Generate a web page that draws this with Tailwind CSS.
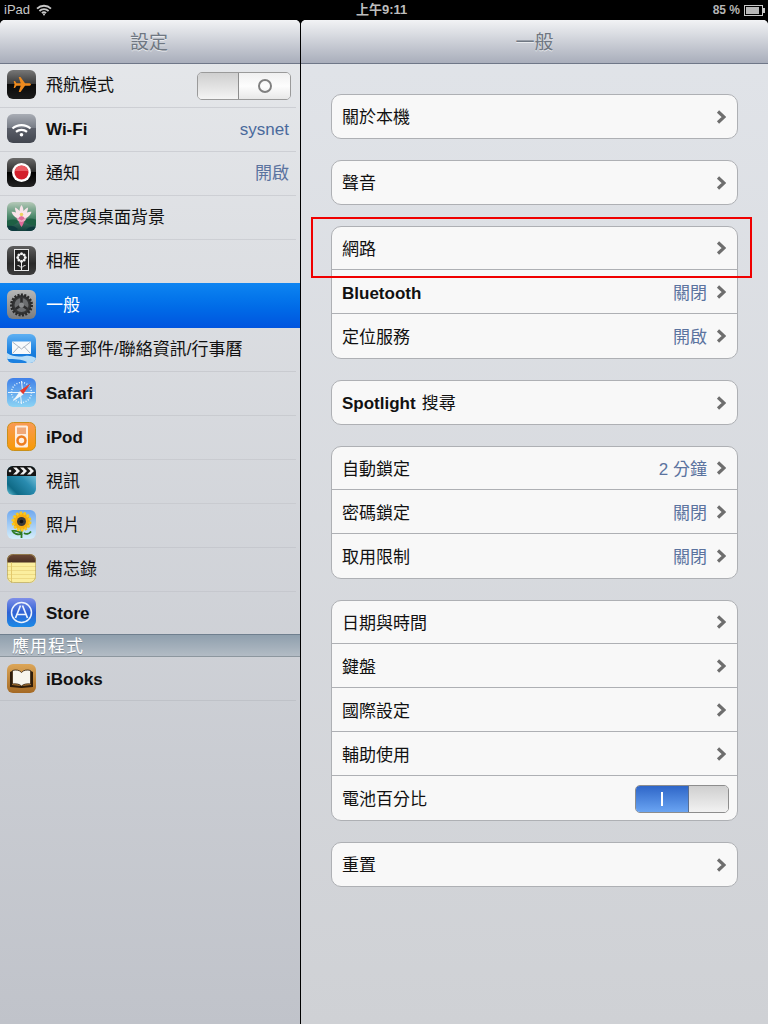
<!DOCTYPE html>
<html lang="zh-TW">
  <head>
    <meta charset="UTF-8" />
    <meta name="viewport" content="width=device-width, initial-scale=1.0" />
    <title>設定</title>
    <script src="https://cdn.jsdelivr.net/npm/@tailwindcss/browser@4"></script>
  </head>
  <body class="bg-black font-['Liberation_Sans','Noto_Sans_CJK_TC',sans-serif]">
    <div class="relative w-[768px] h-[1024px] overflow-hidden bg-black">
      <!-- status bar -->
      <div class="relative flex items-center justify-between h-5 pl-1 pr-[3px] text-[13px] text-[#c8c8c8]">
        <div class="flex items-center gap-[6px]">
          <span>iPad</span>
          <svg width="16" height="12" viewBox="0 0 16 12" fill="none" stroke="#c8c8c8" stroke-width="1.8">
            <path d="M1 4.600C5 .8 11 .8 15 4.600" />
            <path d="M3.400 7C6 4.600 10 4.600 12.600 7" />
            <path d="M5.900 9.200C7 8.200 9 8.200 10.100 9.200" />
            <circle cx="8" cy="10.600" r="1" fill="#c8c8c8" stroke="none" />
          </svg>
        </div>
        <div class="absolute left-[356px] top-0 h-5 leading-[19px] font-bold text-[#bdbdbd]">上午9:11</div>
        <div class="flex items-center gap-1">
          <span class="text-[12px] font-bold text-[#b5b5b5]">85 %</span>
          <svg width="21" height="11" viewBox="0 0 21 11">
            <rect x=".5" y=".5" width="18" height="10" fill="none" stroke="#c8c8c8" />
            <rect x="2" y="2" width="13" height="7" fill="#b8b8b8" />
            <rect x="19" y="3" width="2" height="5" fill="#c8c8c8" />
          </svg>
        </div>
      </div>

      <div class="flex h-[1004px]">
        <!-- left column -->
        <div class="w-[300px] shrink-0 rounded-t-[5px] overflow-hidden bg-gradient-to-b from-[#e6e8eb] to-[#c0c3ca]">
          <div class="flex items-center justify-center h-[44px] pt-[3px] pr-[2px] border-b border-[#6f7788] bg-gradient-to-b from-[#f2f3f5] to-[#a9aebb] text-[19px] text-[#6f7782] [text-shadow:0_1px_0_#e8eaee]">設定</div>

          <div class="flex h-[44px] pt-[6px] pl-[7px] pr-[5px] mr-1 border-b border-[#cdcfd4]">
            <svg class="shrink-0" width="29" height="29" viewBox="0 0 29 29">
              <defs><linearGradient id="air" x1="0" y1="0" x2="0" y2="1"><stop offset="0" stop-color="#777" /><stop offset=".48" stop-color="#3a3a3a" /><stop offset=".5" stop-color="#0a0a0a" /><stop offset="1" stop-color="#1a1a1a" /></linearGradient></defs>
              <rect width="29" height="29" rx="6" fill="url(#air)" />
              <path d="M24 14.500c0-.8-1-1.300-2.500-1.300h-3.500L13.500 7h-1.800l2 6.200H9.500L8 11H6.700l.8 3.500-.8 3.500H8l1.500-2.200h4.200l-2 6.200h1.800l4.500-6.200h3.500c1.500 0 2.500-.5 2.500-1.300z" fill="#ee8a1e" />
            </svg>
            <div class="flex items-center h-[29px] pt-[2px] ml-[10px] text-[17px] text-[#111]">飛航模式</div>
            <div class="flex ml-auto mt-[2px] w-[94px] h-[28px] rounded-[5px] border border-[#9a9a9a] overflow-hidden">
              <div class="w-[41px] border-r border-[#8d8d8d] bg-gradient-to-b from-[#cfcfcf] to-[#f4f4f4]"></div>
              <div class="flex flex-1 items-center justify-center bg-gradient-to-b from-[#f0f0f0] via-[#fdfdfd] to-[#e8e8e8]">
                <div class="w-[14px] h-[14px] rounded-full border-2 border-[#808080]"></div>
              </div>
            </div>
          </div>

          <div class="flex h-[44px] pt-[6px] pl-[7px] pr-[7px] mr-1 border-b border-[#cdcfd4]">
            <svg class="shrink-0" width="29" height="29" viewBox="0 0 29 29" fill="none" stroke="#fff" stroke-width="2.200">
              <defs><linearGradient id="wif" x1="0" y1="0" x2="0" y2="1"><stop offset="0" stop-color="#a9adb5" /><stop offset=".48" stop-color="#767b85" /><stop offset=".5" stop-color="#5a5e68" /><stop offset="1" stop-color="#42464f" /></linearGradient></defs>
              <rect width="29" height="29" rx="6" fill="url(#wif)" stroke="none" />
              <path d="M5.500 14.500C10.500 10 18.500 10 23.500 14.500" />
              <path d="M9 17.800C12 15.300 17 15.300 20 17.800" />
              <circle cx="14.500" cy="20.800" r="1.800" fill="#fff" stroke="none" />
            </svg>
            <div class="flex items-center h-[29px] pt-[2px] ml-[10px] text-[17px] font-bold text-[#111]">Wi-Fi</div>
            <div class="flex items-center h-[29px] pt-[2px] ml-auto text-[17px] text-[#4a6a9c]">sysnet</div>
          </div>

          <div class="flex h-[44px] pt-[6px] pl-[7px] pr-[7px] mr-1 border-b border-[#cdcfd4]">
            <svg class="shrink-0" width="29" height="29" viewBox="0 0 29 29">
              <defs><linearGradient id="ntf" x1="0" y1="0" x2="0" y2="1"><stop offset="0" stop-color="#6a6a6a" /><stop offset=".48" stop-color="#2c2c2c" /><stop offset=".5" stop-color="#000" /><stop offset="1" stop-color="#222" /></linearGradient></defs>
              <rect width="29" height="29" rx="6" fill="url(#ntf)" />
              <circle cx="14.500" cy="14.500" r="9.500" fill="#fff" />
              <circle cx="14.500" cy="14.500" r="7" fill="#d3202c" />
              <path d="M7.700 13a7 7 0 0 1 13.600 0z" fill="#ea5a62" />
            </svg>
            <div class="flex items-center h-[29px] pt-[2px] ml-[10px] text-[17px] text-[#111]">通知</div>
            <div class="flex items-center h-[29px] pt-[2px] ml-auto text-[17px] text-[#5b739f]">開啟</div>
          </div>

          <div class="flex h-[44px] pt-[6px] pl-[7px] mr-1 border-b border-[#cdcfd4]">
            <svg class="shrink-0" width="29" height="29" viewBox="0 0 29 29">
              <defs>
                <linearGradient id="lot" x1="0" y1="0" x2="0" y2="1"><stop offset="0" stop-color="#b5c9b8" /><stop offset=".5" stop-color="#4c8a6c" /><stop offset="1" stop-color="#123f3c" /></linearGradient>
                <clipPath id="lclip"><rect width="29" height="29" rx="6" /></clipPath>
              </defs>
              <g clip-path="url(#lclip)">
                <rect width="29" height="29" fill="url(#lot)" />
                <path d="M-1 19c5-2 10-2 13 0-3 4-9 6-13 5zM30 18c-5-2-10-2-13 1 3 4 9 5 13 4z" fill="#1e6044" />
                <path d="M0 24c4-1 8 0 11 3l-3 3H0zM29 25c-4-1-8 0-10 3l3 2h7z" fill="#0e3b3e" />
              </g>
              <path d="M14.500 3c1.500 2 2 4 2 6 1.500-2 3-3 4.500-3.500 0 2-.5 3.500-1 5 1.500-.8 3-1 4.500-.8-1 3-3 5.500-6 6.800l-4 1-4-1c-3-1.300-5-3.800-6-6.800 1.500-.2 3 0 4.500.8-.5-1.500-1-3-1-5 1.500.5 3 1.500 4.500 3.500 0-2 .5-4 2-6z" fill="#f8e4ea" />
              <path d="M14.500 14c3 1 3.500 2 3 4-.5 2.500-1.500 5-3 7-1.500-2-2.500-4.500-3-7-.5-2 0-3 3-4z" fill="#e26b9a" />
              <path d="M9 15l5.500 3.500L20 15l-2 4-3.500 1-3.500-1z" fill="#f0a9c3" />
              <circle cx="14.500" cy="12.500" r="1.800" fill="#ecd264" />
            </svg>
            <div class="flex items-center h-[29px] pt-[2px] ml-[10px] text-[17px] text-[#111]">亮度與桌面背景</div>
          </div>

          <div class="flex h-[44px] pt-[6px] pl-[7px] mr-1">
            <svg class="shrink-0" width="29" height="29" viewBox="0 0 29 29">
              <defs><linearGradient id="frm" x1="0" y1="0" x2="0" y2="1"><stop offset="0" stop-color="#5e5e5e" /><stop offset=".6" stop-color="#2a2a2a" /><stop offset="1" stop-color="#3c3c3c" /></linearGradient></defs>
              <rect width="29" height="29" rx="6" fill="url(#frm)" />
              <rect x="7.500" y="3.500" width="14" height="21" fill="#222" stroke="#e8e8e8" />
              <g fill="#f2f2f2">
                <circle cx="14.500" cy="7.800" r="1.500" /><circle cx="14.500" cy="15.200" r="1.500" /><circle cx="10.800" cy="11.500" r="1.500" /><circle cx="18.200" cy="11.500" r="1.500" />
                <circle cx="11.900" cy="8.900" r="1.500" /><circle cx="17.100" cy="8.900" r="1.500" /><circle cx="11.900" cy="14.100" r="1.500" /><circle cx="17.100" cy="14.100" r="1.500" />
              </g>
              <circle cx="14.500" cy="11.500" r="2.200" fill="#333" />
              <path d="M14.500 16v8M10.500 19.500c2 0 4 1.500 4 3.500M18.500 19.500c-2 0-4 1.500-4 3.500" fill="none" stroke="#eee" />
            </svg>
            <div class="flex items-center h-[29px] pt-[2px] ml-[10px] text-[17px] text-[#111]">相框</div>
          </div>

          <div class="flex h-[45px] -mt-px pt-[7px] pl-[7px] bg-gradient-to-b from-[#0f85f1] to-[#0154df]">
            <svg class="shrink-0" width="29" height="29" viewBox="0 0 29 29">
              <defs><linearGradient id="gen" x1="0" y1="0" x2="0" y2="1"><stop offset="0" stop-color="#b6b7b7" /><stop offset="1" stop-color="#7a7c7e" /></linearGradient></defs>
              <rect width="29" height="29" rx="6" fill="url(#gen)" />
              <circle cx="14.500" cy="15" r="10" fill="#343536" stroke="#2a2a2a" stroke-width="3" stroke-dasharray="2 1.300" />
              <circle cx="14.500" cy="15" r="7" fill="#6b6d6f" />
              <path d="M14.500 15v-7M14.500 15l6 4M14.500 15l-6 4" stroke="#2d2d2e" stroke-width="2.500" />
              <circle cx="14.500" cy="15" r="2.500" fill="#8a8c8e" />
            </svg>
            <div class="flex items-center h-[29px] pt-[2px] ml-[10px] text-[17px] text-white">一般</div>
          </div>

          <div class="flex h-[44px] pt-[6px] pl-[7px] mr-1 border-b border-[#c9cbd0]">
            <svg class="shrink-0" width="29" height="29" viewBox="0 0 29 29">
              <defs>
                <linearGradient id="mal" x1="0" y1="0" x2="0" y2="1"><stop offset="0" stop-color="#5fb0f2" /><stop offset=".6" stop-color="#1b80e0" /><stop offset="1" stop-color="#0f74d4" /></linearGradient>
                <clipPath id="mclip"><rect width="29" height="29" rx="6" /></clipPath>
              </defs>
              <g clip-path="url(#mclip)">
                <rect width="29" height="29" fill="url(#mal)" />
                <path d="M0 19c6 4 12 4 18 3 4-.5 7 0 11 2v-2 7H0z" fill="#d6eefc" opacity=".85" />
                <path d="M0 25c8 0 14 0 20 3l-2 2H0z" fill="#1b80e0" />
              </g>
              <rect x="5" y="7.500" width="19" height="12.500" rx=".5" fill="#f7f9fb" />
              <path d="M5.500 8l9 7 9-7M5.500 19.500l6.500-7M23.500 19.500l-6.500-7" fill="none" stroke="#aab4c0" />
            </svg>
            <div class="flex items-center h-[29px] pt-[2px] ml-[10px] text-[17px] text-[#111]">電子郵件/聯絡資訊/行事曆</div>
          </div>

          <div class="flex h-[44px] pt-[6px] pl-[7px] mr-1 border-b border-[#c9cbd0]">
            <svg class="shrink-0" width="29" height="29" viewBox="0 0 29 29">
              <defs><linearGradient id="saf" x1="0" y1="0" x2="0" y2="1"><stop offset="0" stop-color="#3f80e8" /><stop offset="1" stop-color="#8bd3f4" /></linearGradient></defs>
              <rect width="29" height="29" rx="6" fill="url(#saf)" />
              <circle cx="14.500" cy="14.500" r="10" fill="none" stroke="#e4f2fb" stroke-dasharray="1 1.600" stroke-width="1.500" />
              <path d="M14.500 3l1.200 11.500H28M14.500 26l-1.200-11.500H1" fill="none" stroke="#e8f4fc" stroke-width="1" />
              <path d="M23.500 5.500l-11 7.500 3.500 3.500z" fill="#e5392f" />
              <path d="M5.500 23.500l11-7-3.500-3.500z" fill="#f0f6fb" />
            </svg>
            <div class="flex items-center h-[29px] pt-[2px] ml-[10px] text-[17px] font-bold text-[#111]">Safari</div>
          </div>

          <div class="flex h-[44px] pt-[6px] pl-[7px] mr-1 border-b border-[#c9cbd0]">
            <svg class="shrink-0" width="29" height="29" viewBox="0 0 29 29">
              <defs><linearGradient id="ipd" x1="0" y1="0" x2="0" y2="1"><stop offset="0" stop-color="#f99a55" /><stop offset="1" stop-color="#f79a05" /></linearGradient></defs>
              <rect x=".5" y=".5" width="28" height="28" rx="6" fill="url(#ipd)" stroke="#c9901a" />
              <rect x="8" y="3.500" width="13" height="22" rx="1.500" fill="#fdeee0" />
              <rect x="10" y="5.500" width="9" height="6.500" fill="#f0a878" />
              <circle cx="14.500" cy="18.500" r="4" fill="#fdeee0" stroke="#ee7d1e" stroke-width="2.500" />
            </svg>
            <div class="flex items-center h-[29px] pt-[2px] ml-[10px] text-[17px] font-bold text-[#111]">iPod</div>
          </div>

          <div class="flex h-[44px] pt-[6px] pl-[7px] mr-1 border-b border-[#c9cbd0]">
            <svg class="shrink-0" width="29" height="29" viewBox="0 0 29 29">
              <defs>
                <linearGradient id="vid" x1="1" y1="0" x2="0" y2="1"><stop offset="0" stop-color="#a5e0f2" /><stop offset=".45" stop-color="#2a8cb0" /><stop offset=".8" stop-color="#0f6a86" /><stop offset="1" stop-color="#66c6dc" /></linearGradient>
                <clipPath id="vclip"><rect width="29" height="29" rx="6" /></clipPath>
              </defs>
              <g clip-path="url(#vclip)">
                <rect width="29" height="29" fill="url(#vid)" />
                <rect width="29" height="10" fill="#151515" />
                <circle cx="3" cy="5" r="1.300" fill="#ddd" />
                <path d="M6 1.500h3.500l3.500 3.500-3.500 3.500H6L9.500 5zM13 1.500h3.500L20 5l-3.500 3.500H13L16.500 5zM20 1.500h3.500L27 5l-3.500 3.500H20L23.500 5z" fill="#f1f1f1" />
              </g>
            </svg>
            <div class="flex items-center h-[29px] pt-[2px] ml-[10px] text-[17px] text-[#111]">視訊</div>
          </div>

          <div class="flex h-[44px] pt-[6px] pl-[7px] mr-1 border-b border-[#c6c8ce]">
            <svg class="shrink-0" width="29" height="29" viewBox="0 0 29 29">
              <defs><linearGradient id="pho" x1="0" y1="0" x2="0" y2="1"><stop offset="0" stop-color="#6fa8ee" /><stop offset="1" stop-color="#d5eefb" /></linearGradient></defs>
              <rect width="29" height="29" rx="6" fill="url(#pho)" />
              <path d="M14.500 18v10M14.500 24c-2-3-5-3.500-9-3 1 2.500 5 4 9 3zM17 23c2 1.500 5 1 7-1.500" fill="none" stroke="#2f7a24" stroke-width="1.800" />
              <circle cx="14.500" cy="11.500" r="8.500" fill="#f7ad10" stroke="#f9c81f" stroke-width="3" stroke-dasharray="2.500 1.300" />
              <circle cx="14.500" cy="11.500" r="4.500" fill="#3b3a38" />
              <circle cx="14.500" cy="11.500" r="1.800" fill="#111" />
            </svg>
            <div class="flex items-center h-[29px] pt-[2px] ml-[10px] text-[17px] text-[#111]">照片</div>
          </div>

          <div class="flex h-[44px] pt-[6px] pl-[7px] mr-1 border-b border-[#c6c8ce]">
            <svg class="shrink-0" width="29" height="29" viewBox="0 0 29 29">
              <defs>
                <linearGradient id="ntp" x1="0" y1="0" x2="0" y2="1"><stop offset="0" stop-color="#6e4a38" /><stop offset="1" stop-color="#4a2f22" /></linearGradient>
                <clipPath id="nclip"><rect width="29" height="29" rx="6" /></clipPath>
              </defs>
              <g clip-path="url(#nclip)">
                <rect width="29" height="29" fill="#fbee9e" />
                <rect width="29" height="8.500" fill="url(#ntp)" />
                <path d="M0 12.500h29M0 16.500h29M0 20.500h29M0 24.500h29" stroke="#eeda84" />
                <path d="M4.500 8.500V29" stroke="#e3c96c" />
              </g>
              <rect x=".5" y=".5" width="28" height="28" rx="6" fill="none" stroke="#a8985a" stroke-opacity=".6" />
            </svg>
            <div class="flex items-center h-[29px] pt-[2px] ml-[10px] text-[17px] text-[#111]">備忘錄</div>
          </div>

          <div class="flex h-[42px] pt-[6px] pl-[7px]">
            <svg class="shrink-0" width="29" height="29" viewBox="0 0 29 29" fill="none" stroke="#eef4fd">
              <defs><linearGradient id="sto" x1="0" y1="0" x2="0" y2="1"><stop offset="0" stop-color="#7f8fe8" /><stop offset=".5" stop-color="#2f62d4" /><stop offset="1" stop-color="#1b8ae6" /></linearGradient></defs>
              <rect width="29" height="29" rx="6" fill="url(#sto)" stroke="none" />
              <circle cx="14.500" cy="14.500" r="10" stroke-width="1.500" />
              <path d="M15.500 7.500L20.500 20M13.500 7.500L8.500 20M9.500 16.500h10" stroke-width="1.700" />
            </svg>
            <div class="flex items-center h-[29px] pt-[2px] ml-[10px] text-[17px] font-bold text-[#111]">Store</div>
          </div>

          <div class="flex items-center h-[23px] pl-[12px] pt-[2px] border-t border-b border-t-[#6f7f8e] border-b-[#8d979f] bg-gradient-to-b from-[#8f9fad] to-[#b3bcc5] text-[17px] tracking-[1px] text-white [text-shadow:0_1px_0_#7d8893]">應用程式</div>

          <div class="flex h-[44px] pt-[7px] pl-[7px] mr-1 border-b border-[#bfc2c8]">
            <svg class="shrink-0" width="29" height="29" viewBox="0 0 29 29">
              <defs><linearGradient id="ibk" x1="0" y1="0" x2="0" y2="1"><stop offset="0" stop-color="#dca658" /><stop offset="1" stop-color="#a56a25" /></linearGradient></defs>
              <rect width="29" height="29" rx="6" fill="url(#ibk)" />
              <path d="M3 8v15l11.500 1L26 23V8l-2-1v14l-9.500 1L5 21V7z" fill="#2d1c0b" />
              <path d="M5.500 6.500c3.500-1 7-.5 9 2 2-2.500 5.500-3 9-2V20c-3.500-.5-7 0-9 2-2-2-5.500-2.500-9-2z" fill="#f7f5ee" stroke="#2d1c0b" stroke-width=".8" />
            </svg>
            <div class="flex items-center h-[29px] pt-[2px] ml-[10px] text-[17px] font-bold text-[#111]">iBooks</div>
          </div>
        </div>

        <!-- right column -->
        <div class="flex-1 ml-px rounded-t-[5px] overflow-hidden bg-gradient-to-b from-[#e1e4e9] to-[#cfd1d5] text-[17px] text-[#111]">
          <div class="flex items-center justify-center h-[44px] pt-[3px] border-b border-[#6f7788] bg-gradient-to-b from-[#f2f3f5] to-[#a9aebb] text-[19px] text-[#6f7782] [text-shadow:0_1px_0_#e8eaee]">一般</div>

          <div class="flex flex-col gap-[21px] pt-[30px] pl-[30px] pr-[30px]">
            <div class="rounded-[10px] border border-[#aeb0b4] bg-[#f8f8f8]">
              <div class="flex items-center h-[43px] px-[10px]"><span class="mt-[3px]">關於本機</span>
                <svg class="ml-auto mr-[1px]" width="10" height="14" viewBox="0 0 10 14" fill="none" stroke="#6e6e6e" stroke-width="3.200"><path d="M2 1.500L8 7 2 12.500" /></svg>
              </div>
            </div>

            <div class="rounded-[10px] border border-[#aeb0b4] bg-[#f8f8f8]">
              <div class="flex items-center h-[43px] px-[10px]"><span class="mt-[3px]">聲音</span>
                <svg class="ml-auto mr-[1px]" width="10" height="14" viewBox="0 0 10 14" fill="none" stroke="#6e6e6e" stroke-width="3.200"><path d="M2 1.500L8 7 2 12.500" /></svg>
              </div>
            </div>

            <div class="rounded-[10px] border border-[#aeb0b4] bg-[#f8f8f8] divide-y divide-[#aeb0b4]">
              <div class="flex items-center h-[43px] px-[10px]"><span class="mt-[4px]">網路</span>
                <svg class="ml-auto mr-[1px]" width="10" height="14" viewBox="0 0 10 14" fill="none" stroke="#6e6e6e" stroke-width="3.200"><path d="M2 1.500L8 7 2 12.500" /></svg>
              </div>
              <div class="flex items-center h-[44px] px-[10px]"><span class="mt-[4px] font-bold">Bluetooth</span>
                <span class="ml-auto mt-[4px] mr-[9px] text-[#5b739f]">關閉</span>
                <svg class="mr-[1px]" width="10" height="14" viewBox="0 0 10 14" fill="none" stroke="#6e6e6e" stroke-width="3.200"><path d="M2 1.500L8 7 2 12.500" /></svg>
              </div>
              <div class="flex items-center h-[44px] px-[10px]"><span class="mt-[4px]">定位服務</span>
                <span class="ml-auto mt-[4px] mr-[9px] text-[#5b739f]">開啟</span>
                <svg class="mr-[1px]" width="10" height="14" viewBox="0 0 10 14" fill="none" stroke="#6e6e6e" stroke-width="3.200"><path d="M2 1.500L8 7 2 12.500" /></svg>
              </div>
            </div>

            <div class="rounded-[10px] border border-[#aeb0b4] bg-[#f8f8f8]">
              <div class="flex items-center h-[43px] px-[10px]"><span class="mt-[3px] font-bold">Spotlight</span><span class="mt-[3px] ml-[6px]">搜尋</span>
                <svg class="ml-auto mr-[1px]" width="10" height="14" viewBox="0 0 10 14" fill="none" stroke="#6e6e6e" stroke-width="3.200"><path d="M2 1.500L8 7 2 12.500" /></svg>
              </div>
            </div>

            <div class="rounded-[10px] border border-[#aeb0b4] bg-[#f8f8f8] divide-y divide-[#aeb0b4]">
              <div class="flex items-center h-[43px] px-[10px]"><span class="mt-[4px]">自動鎖定</span>
                <span class="ml-auto mt-[4px] mr-[9px] text-[#5b739f]">2 分鐘</span>
                <svg class="mr-[1px]" width="10" height="14" viewBox="0 0 10 14" fill="none" stroke="#6e6e6e" stroke-width="3.200"><path d="M2 1.500L8 7 2 12.500" /></svg>
              </div>
              <div class="flex items-center h-[44px] px-[10px]"><span class="mt-[4px]">密碼鎖定</span>
                <span class="ml-auto mt-[4px] mr-[9px] text-[#5b739f]">關閉</span>
                <svg class="mr-[1px]" width="10" height="14" viewBox="0 0 10 14" fill="none" stroke="#6e6e6e" stroke-width="3.200"><path d="M2 1.500L8 7 2 12.500" /></svg>
              </div>
              <div class="flex items-center h-[44px] px-[10px]"><span class="mt-[4px]">取用限制</span>
                <span class="ml-auto mt-[4px] mr-[9px] text-[#5b739f]">關閉</span>
                <svg class="mr-[1px]" width="10" height="14" viewBox="0 0 10 14" fill="none" stroke="#6e6e6e" stroke-width="3.200"><path d="M2 1.500L8 7 2 12.500" /></svg>
              </div>
            </div>

            <div class="rounded-[10px] border border-[#aeb0b4] bg-[#f8f8f8] divide-y divide-[#aeb0b4]">
              <div class="flex items-center h-[43px] px-[10px]"><span class="mt-[4px]">日期與時間</span>
                <svg class="ml-auto mr-[1px]" width="10" height="14" viewBox="0 0 10 14" fill="none" stroke="#6e6e6e" stroke-width="3.200"><path d="M2 1.500L8 7 2 12.500" /></svg>
              </div>
              <div class="flex items-center h-[44px] px-[10px]"><span class="mt-[4px]">鍵盤</span>
                <svg class="ml-auto mr-[1px]" width="10" height="14" viewBox="0 0 10 14" fill="none" stroke="#6e6e6e" stroke-width="3.200"><path d="M2 1.500L8 7 2 12.500" /></svg>
              </div>
              <div class="flex items-center h-[44px] px-[10px]"><span class="mt-[4px]">國際設定</span>
                <svg class="ml-auto mr-[1px]" width="10" height="14" viewBox="0 0 10 14" fill="none" stroke="#6e6e6e" stroke-width="3.200"><path d="M2 1.500L8 7 2 12.500" /></svg>
              </div>
              <div class="flex items-center h-[44px] px-[10px]"><span class="mt-[4px]">輔助使用</span>
                <svg class="ml-auto mr-[1px]" width="10" height="14" viewBox="0 0 10 14" fill="none" stroke="#6e6e6e" stroke-width="3.200"><path d="M2 1.500L8 7 2 12.500" /></svg>
              </div>
              <div class="flex items-center h-[44px] px-[10px]"><span class="mt-[4px]">電池百分比</span>
                <div class="flex ml-auto -mr-[2px] mt-[1px] w-[94px] h-[28px] rounded-[5px] border border-[#8d8d8d] overflow-hidden">
                  <div class="flex flex-1 items-center justify-center bg-gradient-to-b from-[#2f66c8] to-[#6aa4f2]">
                    <div class="w-[2px] h-[14px] bg-white"></div>
                  </div>
                  <div class="w-[40px] border-l border-[#5c6f8f] bg-gradient-to-b from-[#cfcfcf] to-[#f2f2f2]"></div>
                </div>
              </div>
            </div>

            <div class="rounded-[10px] border border-[#aeb0b4] bg-[#f8f8f8]">
              <div class="flex items-center h-[43px] px-[10px]"><span class="mt-[3px]">重置</span>
                <svg class="ml-auto mr-[1px]" width="10" height="14" viewBox="0 0 10 14" fill="none" stroke="#6e6e6e" stroke-width="3.200"><path d="M2 1.500L8 7 2 12.500" /></svg>
              </div>
            </div>
          </div>
        </div>
      </div>

      <!-- red annotation box -->
      <div class="absolute left-[311px] top-[217px] w-[441px] h-[61px] border-2 border-[#f00000]"></div>
    </div>
  </body>
</html>
